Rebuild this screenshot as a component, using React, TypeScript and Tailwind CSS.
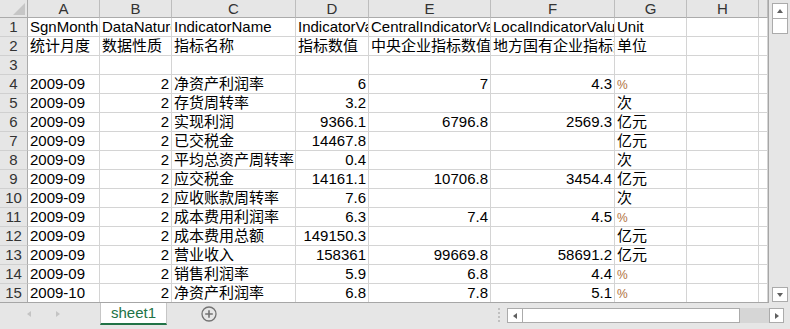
import React from 'react';

const FONT = { fontFamily: '"Liberation Sans", "Noto Sans CJK SC", sans-serif' };

const cols = ['A', 'B', 'C', 'D', 'E', 'F', 'G', 'H', ''];

// one row = [A, B, C, D, E, F, G]
const rows: string[][] = [
  ['SgnMonth', 'DataNature', 'IndicatorName', 'IndicatorValue', 'CentralIndicatorValue', 'LocalIndicatorValue', 'Unit'],
  ['统计月度', '数据性质', '指标名称', '指标数值', '中央企业指标数值', '地方国有企业指标数值', '单位'],
  ['', '', '', '', '', '', ''],
  ['2009-09', '2', '净资产利润率', '6', '7', '4.3', '%'],
  ['2009-09', '2', '存货周转率', '3.2', '', '', '次'],
  ['2009-09', '2', '实现利润', '9366.1', '6796.8', '2569.3', '亿元'],
  ['2009-09', '2', '已交税金', '14467.8', '', '', '亿元'],
  ['2009-09', '2', '平均总资产周转率', '0.4', '', '', '次'],
  ['2009-09', '2', '应交税金', '14161.1', '10706.8', '3454.4', '亿元'],
  ['2009-09', '2', '应收账款周转率', '7.6', '', '', '次'],
  ['2009-09', '2', '成本费用利润率', '6.3', '7.4', '4.5', '%'],
  ['2009-09', '2', '成本费用总额', '149150.3', '', '', '亿元'],
  ['2009-09', '2', '营业收入', '158361', '99669.8', '58691.2', '亿元'],
  ['2009-09', '2', '销售利润率', '5.9', '6.8', '4.4', '%'],
  ['2009-10', '2', '净资产利润率', '6.8', '7.8', '5.1', '%'],
];

const Tri = ({ dir, color = '#606060', size = 8 }: { dir: 'up' | 'down' | 'left' | 'right'; color?: string; size?: number }) => {
  const pts = {
    up: '1,6 7,6 4,2',
    down: '1,2 7,2 4,6',
    left: '6,1 6,7 2,4',
    right: '2,1 2,7 6,4',
  }[dir];
  return (
    <svg width={size} height={size} viewBox="0 0 8 8">
      <polygon points={pts} fill={color} />
    </svg>
  );
};

const cell = 'h-[19px] border-r border-b border-[#d4d4d4] px-[2px] overflow-hidden whitespace-nowrap leading-[18px] text-[15px] text-black bg-white';

export default function App() {
  return (
    <div className="w-[790px] h-[329px] bg-[#e6e6e6] flex flex-col overflow-hidden" style={FONT}>
      <div className="flex h-[303px]">
        <div className="w-[769px] border-r border-b border-[#a6a6a6] overflow-hidden">
          <div className="grid grid-cols-[28px_72px_72px_124px_73px_122px_124px_72px_72px_9px]">
            {/* header row */}
            <div className="h-[18px] bg-[#e6e6e6] border-r border-b border-[#ababab] flex items-end justify-end pr-[2px] pb-[2px]">
              <svg width="12" height="12" viewBox="0 0 12 12">
                <polygon points="12,0 12,12 0,12" fill="#c6c6c6" />
              </svg>
            </div>
            {cols.map((c, i) => (
              <div key={i} className="h-[18px] bg-[#e6e6e6] border-r border-b border-[#bdbdbd] border-b-[#ababab] text-center leading-[18px] text-[15px] text-[#333]">
                {c}
              </div>
            ))}
            {rows.map((r, ri) => (
              <React.Fragment key={ri}>
                <div className="h-[19px] bg-[#e6e6e6] border-r border-r-[#ababab] border-b border-b-[#d0d0d0] text-center leading-[18px] text-[15px] text-[#333]">
                  {ri + 1}
                </div>
                {r.map((v, ci) => {
                  const numeric = ri >= 3 && ci !== 0 && ci !== 2 && ci !== 6;
                  return (
                    <div key={ci} className={`${cell} ${numeric ? 'text-right' : 'text-left'}`}>
                      {v === '%' ? <span className="text-[12px] text-[#b0703c]">%</span> : v}
                    </div>
                  );
                })}
                <div className={cell}></div>
                <div className={cell}></div>
              </React.Fragment>
            ))}
          </div>
        </div>
        {/* vertical scrollbar */}
        <div className="flex-1 flex flex-col items-center pt-[3px] pb-[1px]">
          <div className="w-[16px] h-[16px] bg-white border border-[#ababab] flex items-center justify-center">
            <Tri dir="up" />
          </div>
          <div className="w-[16px] h-[15px] bg-white border border-[#ababab] border-t-0"></div>
          <div className="flex-1"></div>
          <div className="w-[16px] h-[15px] bg-white border border-[#ababab] flex items-center justify-center">
            <Tri dir="down" />
          </div>
        </div>
      </div>

      {/* bottom bar */}
      <div className="flex-1 flex items-start">
        <div className="w-[100px] h-[22px] flex items-center pl-[25px] gap-[21px]">
          <Tri dir="left" color="#c4c4c4" />
          <Tri dir="right" color="#c4c4c4" />
        </div>
        <div className="w-[67px] h-[22px] bg-white border-x border-[#c6c6c6] border-b-2 border-b-[#217346] text-[15px] text-[#217346] text-center leading-[20px]">
          sheet1
        </div>
        <div className="w-[82px] h-[22px] flex items-center justify-center pl-[1px]">
          <svg width="16" height="16" viewBox="0 0 16 16">
            <circle cx="8" cy="8" r="7" fill="none" stroke="#737373" strokeWidth="1.3" />
            <path d="M8 4.2v7.6M4.2 8h7.6" stroke="#737373" strokeWidth="1.6" />
          </svg>
        </div>
        <div className="w-[242px]"></div>
        <div className="w-[16px] h-[22px] flex flex-col items-center justify-center gap-[2px] pt-[1px]">
          <div className="w-[2px] h-[2px] bg-[#c0c0c0]"></div>
          <div className="w-[2px] h-[2px] bg-[#c0c0c0]"></div>
          <div className="w-[2px] h-[2px] bg-[#c0c0c0]"></div>
          <div className="w-[2px] h-[2px] bg-[#c0c0c0]"></div>
        </div>
        <div className="w-[277px] h-[15px] mt-[5px] flex">
          <div className="w-[16px] h-full bg-white border border-[#ababab] flex items-center justify-center">
            <Tri dir="left" />
          </div>
          <div className="w-[217px] h-full bg-white border-y border-r border-[#ababab]"></div>
          <div className="flex-1 h-full bg-[#d6d6d6]"></div>
          <div className="w-[15px] h-full bg-white border border-[#ababab] flex items-center justify-center">
            <Tri dir="right" />
          </div>
        </div>
      </div>
    </div>
  );
}
